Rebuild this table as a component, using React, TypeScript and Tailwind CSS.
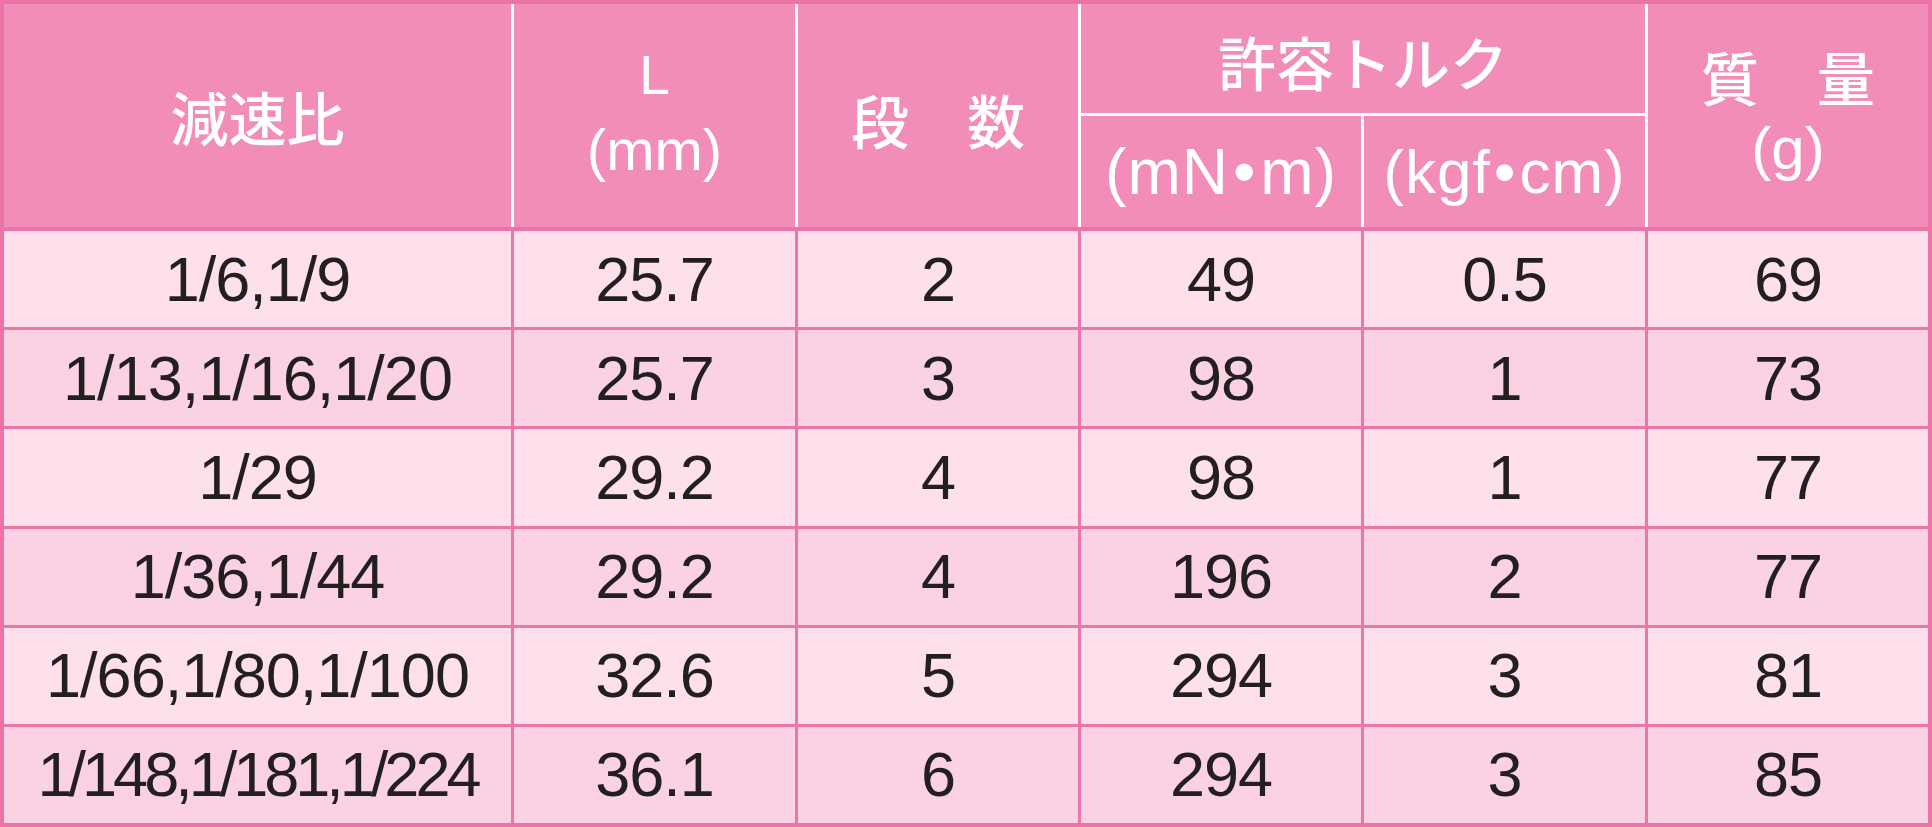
import React from "react";

const rows: string[][] = [
  ["1/6,1/9", "25.7", "2", "49", "0.5", "69"],
  ["1/13,1/16,1/20", "25.7", "3", "98", "1", "73"],
  ["1/29", "29.2", "4", "98", "1", "77"],
  ["1/36,1/44", "29.2", "4", "196", "2", "77"],
  ["1/66,1/80,1/100", "32.6", "5", "294", "3", "81"],
  ["1/148,1/181,1/224", "36.1", "6", "294", "3", "85"],
];

const cols = "grid grid-cols-[507px_284px_283px_283px_284px_1fr]";
const jp = "font-['Noto_Sans_CJK_JP',sans-serif] font-medium leading-none";
const latin = "font-['Liberation_Sans',Arial,sans-serif]";

export default function App() {
  return (
    <div className="w-[1932px] h-[827px] bg-white">
      <div className="w-full h-full flex flex-col border-4 border-[#ec72a8] text-[#231f20]">
        {/* header */}
        <div className={`${cols} h-[227px] shrink-0 bg-[#f28cb9] border-b-4 border-[#ec72a8] text-white`}>
          <div className={`flex items-center justify-center text-[58px] ${jp}`}>減速比</div>
          <div className={`border-l-[3px] border-white flex flex-col items-center pt-[44px] ${latin}`}>
            <span className="text-[55px] leading-[54px]">L</span>
            <span className="mt-[19px] text-[58px] leading-[58px]">(mm)</span>
          </div>
          <div className={`border-l-[3px] border-white flex items-center justify-center pt-[6px] text-[58px] ${jp}`}>
            段　数
          </div>
          <div className="col-span-2 border-l-[3px] border-white flex flex-col">
            <div className={`h-[112px] shrink-0 border-b-[3px] border-white flex items-center justify-center pt-[4px] text-[58px] ${jp}`}>
              許容トルク
            </div>
            <div className={`flex-1 grid grid-cols-[280px_1fr] leading-none ${latin}`}>
              <div className="flex items-center justify-center text-[64px] tracking-[1px]">
                (mN<span className="mx-[4px]">•</span>m)
              </div>
              <div className="border-l-[3px] border-white flex items-center justify-center text-[62px] tracking-[1px]">
                (kgf<span className="mx-[3px]">•</span>cm)
              </div>
            </div>
          </div>
          <div className="border-l-[3px] border-white flex flex-col items-center justify-center pt-[8px]">
            <span className={`text-[58px] ${jp}`}>質　量</span>
            <span className={`text-[60px] leading-[88px] ${latin}`}>(g)</span>
          </div>
        </div>

        {/* body */}
        {rows.map((r, i) => (
          <div
            key={i}
            className={`flex-1 ${cols} ${i > 0 ? "border-t-[3px] border-[#ec76ab]" : ""} ${
              i % 2 === 0 ? "bg-[#fde0ec]" : "bg-[#fbd2e4]"
            }`}
          >
            {r.map((c, j) => (
              <div
                key={j}
                className={`flex items-center justify-center text-[63px] leading-none ${latin} ${
                  j > 0 ? "border-l-[3px] border-[#ec76ab]" : ""
                } ${i === 5 && j === 0 ? "tracking-[-4px]" : "tracking-[-1px]"}`}
              >
                {c}
              </div>
            ))}
          </div>
        ))}
      </div>
    </div>
  );
}
